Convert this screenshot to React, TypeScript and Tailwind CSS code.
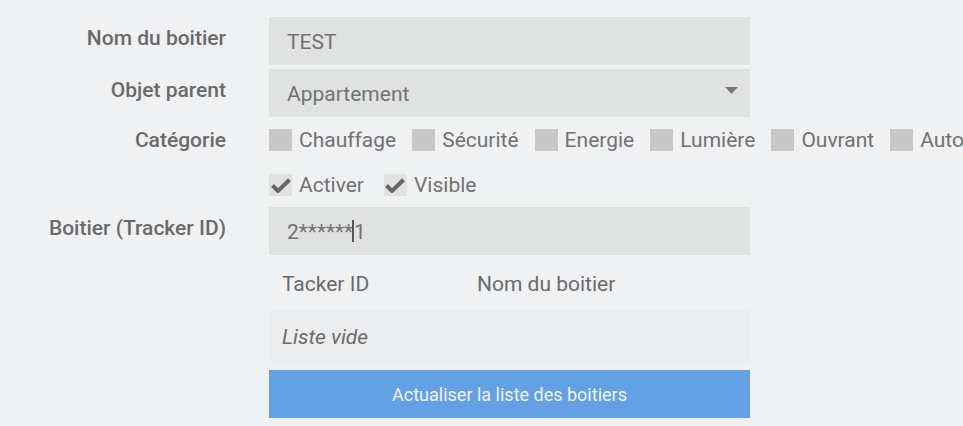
import React from 'react';

const categories = ['Chauffage', 'Sécurité', 'Energie', 'Lumière', 'Ouvrant', 'Automatisme'];

function Box({ checked }: { checked?: boolean }) {
  return (
    <span
      className={`flex h-[22px] w-[23px] shrink-0 items-center justify-center ${
        checked ? 'bg-[#e0e1e1]' : 'bg-[#c8c8c8]'
      }`}
    >
      {checked && (
        <svg width="20" height="15" viewBox="0 0 20 15">
          <path d="M1.5 7.5 L7 13 L18.5 1.8" fill="none" stroke="#666" strokeWidth="4" />
        </svg>
      )}
    </span>
  );
}

function Label({ children }: { children: React.ReactNode }) {
  return (
    <div className="flex h-[48px] items-center justify-end pb-[4px] text-[21px] font-medium text-[#6a6a6a]">
      {children}
    </div>
  );
}

export default function App() {
  return (
    <div
      className="h-[426px] w-[963px] overflow-hidden bg-[#f0f1f3] pt-[17px] whitespace-nowrap"
      style={{ fontFamily: 'Roboto, "Liberation Sans", sans-serif' }}
    >
      <div className="grid grid-cols-[226px_481px] gap-x-[43px]">
        {/* Nom du boitier */}
        <Label>Nom du boitier</Label>
        <div className="flex h-[48px] items-center bg-[#e0e1e1] px-[18px] pt-[3px] text-[21px] text-[#727272]">TEST</div>

        {/* Objet parent */}
        <div className="mt-[4px]">
          <Label>Objet parent</Label>
        </div>
        <div className="mt-[4px] flex h-[48px] items-center justify-between bg-[#e0e1e1] pl-[18px] pr-[12px] text-[21px] text-[#727272]">
          <span className="pt-[3px]">Appartement</span>
          <svg width="13" height="7" viewBox="0 0 13 7" className="mb-[6px]">
            <path d="M0 0 H13 L6.5 7 Z" fill="#777" />
          </svg>
        </div>

        {/* Catégorie */}
        <div className="mt-[12px] flex h-[22px] items-center justify-end pt-[2px] text-[21px] font-medium text-[#6a6a6a]">
          Catégorie
        </div>
        <div className="mt-[12px] flex h-[22px] items-center text-[21px] text-[#727272]">
          {categories.map((c) => (
            <span key={c} className="mr-[16px] flex items-center gap-[7px]">
              <Box />
              <span className="pt-[2px]">{c}</span>
            </span>
          ))}
        </div>

        {/* Activer / Visible */}
        <div className="mt-[23px]" />
        <div className="mt-[23px] flex h-[22px] items-center text-[21px] text-[#727272]">
          <span className="mr-[20px] flex items-center gap-[7px]">
            <Box checked />
            <span className="pt-[2px]">Activer</span>
          </span>
          <span className="flex items-center gap-[7px]">
            <Box checked />
            <span className="pt-[2px]">Visible</span>
          </span>
        </div>

        {/* Boitier (Tracker ID) */}
        <div className="mt-[11px]">
          <Label>Boitier (Tracker ID)</Label>
        </div>
        <div className="mt-[11px] flex h-[48px] items-center bg-[#e0e1e1] px-[18px] pt-[3px] text-[21px] text-[#727272]">
          <span>2******</span>
          <span className="-ml-[1px] -mt-[3px] inline-block h-[22px] w-[2px] bg-[#555]" />
          <span>1</span>
        </div>

        {/* Liste des boitiers */}
        <div />
        <div className="flex flex-col">
          <div className="grid h-[55px] grid-cols-[208px_1fr] items-center pt-[5px] text-[21px] text-[#6a6a6a]">
            <span className="pl-[13px]">Tacker ID</span>
            <span>Nom du boitier</span>
          </div>
          <div className="flex h-[53px] items-center bg-[#ecedee] pl-[13px] pt-[3px] text-[21px] italic text-[#6a6a6a]">
            Liste vide
          </div>
          <button className="mt-[7px] h-[48px] bg-[#64a0e4] text-[18px] text-[#f2f4f8]">
            Actualiser la liste des boitiers
          </button>
        </div>
      </div>
    </div>
  );
}
